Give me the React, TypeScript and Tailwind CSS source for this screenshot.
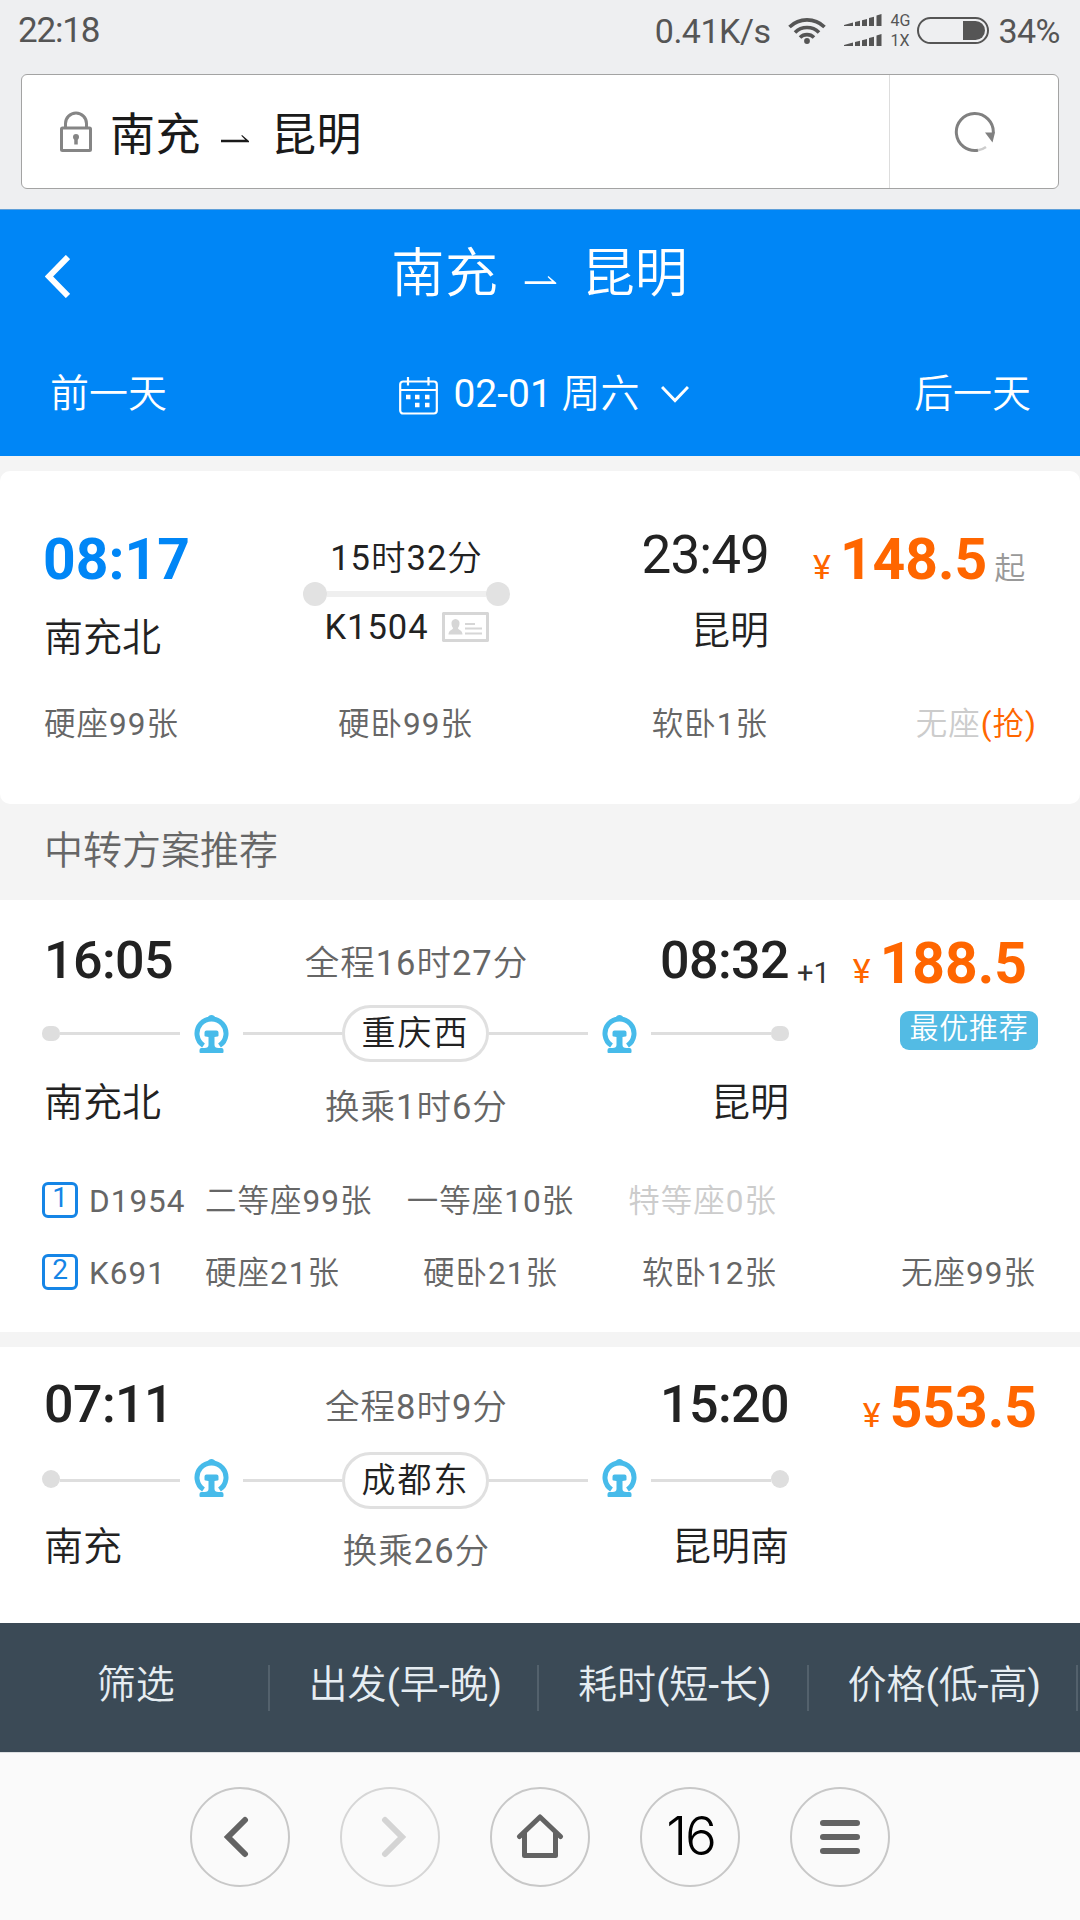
import type { ReactNode } from 'react';

interface Seat { label: string; soldOut?: boolean; }
interface Leg { train: string; seats: Seat[]; }

interface Transfer {
  depart: string;
  arrive: string;
  plusDay?: string;
  total: string;
  from: string;
  to: string;
  via: string;
  wait: string;
  price: string;
}

const legs: Leg[] = [
  { train: 'D1954', seats: [{ label: '二等座99张' }, { label: '一等座10张' }, { label: '特等座0张', soldOut: true }] },
  { train: 'K691', seats: [{ label: '硬座21张' }, { label: '硬卧21张' }, { label: '软卧12张' }, { label: '无座99张' }] },
];

const first: Transfer = {
  depart: '16:05', arrive: '08:32', plusDay: '+1', total: '全程16时27分',
  from: '南充北', to: '昆明', via: '重庆西', wait: '换乘1时6分', price: '188.5',
};

const second: Transfer = {
  depart: '07:11', arrive: '15:20', total: '全程8时9分',
  from: '南充', to: '昆明南', via: '成都东', wait: '换乘26分', price: '553.5',
};

const sorts = ['筛选', '出发(早-晚)', '耗时(短-长)', '价格(低-高)'];

function StatusBar() {
  return (
    <div className="flex h-[60px] items-center pl-[18px] pr-[20px] text-[34px] leading-[60px] text-[#555]">
      <span className="mt-[2px] text-[35px] tracking-[-1.2px]">22:18</span>
      <span className="ml-auto mt-px tracking-[-0.5px]">0.41K/s</span>
      <svg className="ml-[18px] h-[28px] w-[38px]" viewBox="0 0 38 28" fill="none" stroke="#555" strokeWidth="3.6">
        <path d="M1.5 11a25 25 0 0 1 35 0" />
        <path d="M7 16.500a17 17 0 0 1 24 0" />
        <path d="M12 21.500a10 10 0 0 1 14 0" />
        <circle cx="19" cy="25" r="2.900" fill="#555" stroke="none" />
      </svg>
      <div className="ml-[18px] flex flex-col gap-[8px]">
        <SignalBars />
        <SignalBars />
      </div>
      <div className="ml-[8px] mt-[2px] flex flex-col text-[16px] leading-[20px]">
        <span>4G</span>
        <span>1X</span>
      </div>
      <div className="ml-[7px] flex h-[27px] w-[72px] items-center justify-end rounded-full border-2 border-[#555] pr-[2px]">
        <div className="h-[19px] w-[22px] rounded-r-full bg-[#555]" />
      </div>
      <span className="ml-[9px] mt-px tracking-[-0.5px]">34%</span>
    </div>
  );
}

function SignalBars() {
  return (
    <svg className="h-[12px] w-[38px]" viewBox="0 0 38 12" fill="#555">
      <path d="M0 11 9 8.500V12H0zM11 8l5-1.200V12h-5zM18 6.300l5-1.200V12h-5zM25 4l5-1.200V12h-5zM32.500 1.500l5-1.500v12h-5z" />
    </svg>
  );
}

function AddressBar() {
  return (
    <div className="mx-[21px] mt-[14px] flex h-[115px] rounded-[6px] border border-[#a3a3a3] bg-white">
      <div className="flex flex-1 items-center pl-[38px] text-[45px] leading-[60px] text-[#1a1a1a]">
        <svg className="h-[41px] w-[32px]" viewBox="0 0 32 41" fill="none" stroke="#858585" strokeWidth="3">
          <rect x="1.500" y="17" width="29" height="22.500" rx="1" />
          <path d="M5.500 17V12.500a10.500 10.500 0 0 1 21 0V17" />
          <circle cx="16" cy="26" r="3" fill="#858585" stroke="none" />
          <path d="M16 26v7.500" strokeWidth="3.500" />
        </svg>
        <span className="ml-[18px] font-['Noto_Sans_CJK_SC',sans-serif] tracking-[0.5px]">南充</span>
        <Harpoon className="ml-[20px] mt-[14px] h-[8px] w-[28px]" />
        <span className="ml-[22px] font-['Noto_Sans_CJK_SC',sans-serif] tracking-[0.5px]">昆明</span>
      </div>
      <div className="flex w-[169px] items-center justify-center border-l border-[#ddd]">
        <svg className="ml-[2px] h-[42px] w-[42px]" viewBox="0 0 42 42" fill="none">
          <path d="M39.300 22A18.500 18.500 0 1 0 24 39.300" stroke="#808080" strokeWidth="3" />
          <path d="M24 39.300a18.500 18.500 0 0 0 8-3.200" stroke="#ccc" strokeWidth="2.500" />
          <path d="M31 21.500h10l-2.500 10z" fill="#808080" />
        </svg>
      </div>
    </div>
  );
}

function Harpoon({ className }: { className: string }) {
  return (
    <svg className={className} viewBox="0 0 28 8" fill="currentColor">
      <path d="M0 4.700h24.200L20.300.8 21 0l7 6v1.200H0z" />
    </svg>
  );
}

function RouteHeader() {
  return (
    <div className="h-[247px] border-t border-[#5f9fd8] bg-[#0086f6] px-[45px] text-white">
      <div className="flex h-[124px] items-center">
        <svg className="mt-[9px] h-[43px] w-[25px]" viewBox="0 0 25 43" fill="none" stroke="#fff" strokeWidth="6">
          <path d="M23 2 4 21.500 23 41" />
        </svg>
        <div className="mx-auto flex items-center pr-[26px] pt-[4px] text-[53px] leading-[64px]">
          <span className="tracking-[0.8px]">南充</span>
          <Harpoon className="ml-[25px] mt-[12px] h-[9px] w-[33px]" />
          <span className="ml-[25px]">昆明</span>
        </div>
      </div>
      <div className="flex h-[120px] items-center justify-between pl-[5px] pr-[4px] text-[39px] leading-[60px]">
        <span>前一天</span>
        <div className="flex items-center pl-[7px]">
          <svg className="mr-px mt-[3px] h-[38px] w-[39px]" viewBox="0 0 39 38" fill="none" stroke="#fff" strokeWidth="2.200">
            <rect x="1.200" y="4.500" width="36.600" height="32" rx="3" />
            <path d="M1.200 13H37.800M9 0v8.500M29.500 0v8.500" />
            <path d="M7 20h4.500M16 20h4.500M26 20h4.500M16 28h4.500M26 28h4.500" strokeWidth="4.500" />
          </svg>
          <span className="ml-[14px]">02-01 周六</span>
          <svg className="ml-[21px] h-[18px] w-[28px]" viewBox="0 0 28 18" fill="none" stroke="#fff" strokeWidth="3">
            <path d="M1 2 14 15.500 27 2" />
          </svg>
        </div>
        <span>后一天</span>
      </div>
    </div>
  );
}

function Price({ value, children }: { value: string; children?: ReactNode }) {
  return (
    <div className="flex items-baseline leading-[60px] text-[#ff6600]">
      <span className="text-[34px]">¥</span>
      <span className="ml-[9px] text-[57px] font-bold">{value}</span>
      {children}
    </div>
  );
}

function DirectCard() {
  return (
    <div className="h-[333px] rounded-[10px] bg-white pl-[44px] pr-[43px] pt-[58px] text-[#222]">
      <div className="flex h-[176px]">
        <div className="w-[241px]">
          <div className="-ml-px mt-px text-[57px] font-bold leading-[60px] text-[#0086f6]">08:17</div>
          <div className="mt-[28px] text-[39px] leading-[40px]">南充北</div>
        </div>
        <div className="flex w-[243px] flex-col items-center pt-[9px] text-[34.5px] leading-[40px] tracking-[1px]">
          <div>15时32分</div>
          <div className="mt-[4px] flex h-[24px] w-[207px] items-center">
            <span className="size-[24px] rounded-full bg-[#e2e2e2]" />
            <span className="h-[6px] flex-1 bg-[#efefef]" />
            <span className="size-[24px] rounded-full bg-[#e2e2e2]" />
          </div>
          <div className="mt-px flex items-center gap-[13px]">
            <span>K1504</span>
            <svg className="h-[30px] w-[47px]" viewBox="0 0 47 30" fill="#d6d6d6">
              <path fillRule="evenodd" d="M1 0h45l1 1v28l-1 1H1l-1-1V1zM3 3v24h41V3z" />
              <path d="M13.500 7a4.300 4.300 0 0 1 4 5c-.2 2-1 3-1.500 4 0 2 4.500 2 4.500 6.500h-14c0-4.500 4.500-4.500 4.500-6.500-.6-1-1.400-2-1.500-4a4.300 4.300 0 0 1 4-5z" />
              <path d="M23 11h10v2H23zM23 15.500h17v2H23zM23 20.500h17v2H23z" />
            </svg>
          </div>
        </div>
        <div className="-mt-[4px] w-[241px] text-right">
          <div className="text-[53px] leading-[60px] tracking-[-0.9px]">23:49</div>
          <div className="mt-[26px] text-[39px] leading-[40px]">昆明</div>
        </div>
        <div className="pl-[44px] pt-px">
          <Price value="148.5">
            <span className="ml-[7px] text-[31px] text-[#999]">起</span>
          </Price>
        </div>
      </div>
      <div className="flex text-[31.5px] leading-[40px] tracking-[1px] text-[#666]">
        <span className="w-[241px]">硬座99张</span>
        <span className="w-[241px] text-center">硬卧99张</span>
        <span className="w-[242px] text-right">软卧1张</span>
        <span className="flex-1 text-right text-[#ccc]">无座<span className="text-[#ff6600]">(抢)</span></span>
      </div>
    </div>
  );
}

function RailIcon({ className }: { className: string }) {
  return (
    <svg className={className} viewBox="0 0 35 38" fill="none">
      <path d="M9.500 30.500A14.500 14.500 0 1 1 25.500 30.500" stroke="#47bbea" strokeWidth="5" />
      <path d="M13.500 3c1-4 7-4 8 0z" fill="#47bbea" />
      <path d="M12.500 15.500h10q2 0 2 2v3q0 1-1 1l-3 .5v8q0 3 4 3h3q2 0 2 2v2q0 1-1 1h-22q-1 0-1-1v-2q0-2 2-2h3q4 0 4-3v-8l-3-.5q-1 0-1-1v-3q0-2 2-2z" fill="#47bbea" />
    </svg>
  );
}

function RouteLine({ via, raised }: { via: string; raised?: boolean }) {
  const dot = raised ? 'h-[15px] w-[18px] rounded-[7px] bg-[#dedede]' : 'mb-[4px] size-[18px] rounded-full bg-[#dedede]';
  const icon = raised ? 'mx-[14px] mt-px h-[38px] w-[35px]' : 'mx-[14px] mb-[5px] h-[38px] w-[35px]';
  return (
    <div className="-ml-[2px] flex h-[57px] w-[747px] items-center">
      <span className={dot} />
      <span className="h-[3px] w-[120px] bg-[#dedede]" />
      <RailIcon className={icon} />
      <span className="h-[3px] flex-1 bg-[#dedede]" />
      <span className="flex h-[57px] w-[147px] justify-center rounded-full border-[3px] border-[#e0e0e0] text-[34px] leading-[50px] tracking-[2px]">{via}</span>
      <span className="h-[3px] flex-1 bg-[#dedede]" />
      <RailIcon className={icon} />
      <span className="h-[3px] w-[120px] bg-[#dedede]" />
      <span className={dot} />
    </div>
  );
}

function TransferInfo({ plan, raised, tag }: { plan: Transfer; raised?: boolean; tag?: string }) {
  return (
    <div className="flex text-[#222]">
      <div className="w-[745px]">
        <div className="grid h-[60px] grid-cols-3 text-[52px] font-medium leading-[64px] tracking-[-0.6px]">
          <span>{plan.depart}</span>
          <span className="pt-[2px] text-center text-[34.5px] font-normal tracking-[1px] text-[#666]">{plan.total}</span>
          <span className="text-right">{plan.arrive}</span>
        </div>
        <div className={raised ? 'mt-[16px]' : 'mt-[19px]'}>
          <RouteLine via={plan.via} raised={raised} />
        </div>
        <div className={raised ? 'mt-[21px] grid h-[49px] grid-cols-3' : 'mt-[18px] grid h-[49px] grid-cols-3'}>
          <span className="text-[39px] leading-[40px]">{plan.from}</span>
          <span className="pt-[4px] text-center text-[34.5px] leading-[40px] tracking-[1px] text-[#666]">{plan.wait}</span>
          <span className="text-right text-[39px] leading-[40px]">{plan.to}</span>
        </div>
      </div>
      <div className="flex flex-1 flex-col items-end">
        <div className="mt-[5px] flex h-[60px] w-full items-baseline justify-end">
          {plan.plusDay && <span className="mr-auto pl-[8px] text-[29px] leading-[60px] text-[#333]">{plan.plusDay}</span>}
          <div className={plan.plusDay ? 'mr-[10px]' : ''}>
            <Price value={plan.price} />
          </div>
        </div>
        {tag && (
          <span className="mr-[-1px] mt-[17px] h-[39px] w-[138px] rounded-[9px] bg-[#53bbe4] text-center text-[29px] leading-[36px] tracking-[0.700px] text-white">{tag}</span>
        )}
      </div>
    </div>
  );
}

function LegRow({ index, leg }: { index: number; leg: Leg }) {
  return (
    <div className="flex h-[36px] items-center text-[31.5px] leading-[36px] tracking-[1px] text-[#666]">
      <span className="-ml-[2px] h-[36px] w-[36px] rounded-[6px] border-[3px] border-[#1585e6] text-center text-[28px] leading-[26px] tracking-normal text-[#1585e6]">{index}</span>
      <span className="mt-[3px] w-[127px] pl-[11px]">{leg.train}</span>
      <div className="mt-[3px] flex flex-1">
        <span className="w-[190px]">{leg.seats[0].label}</span>
        <span className="w-[191px] text-center">{leg.seats[1].label}</span>
        <span className={leg.seats[2].soldOut ? 'w-[191px] text-right text-[#ccc]' : 'w-[191px] text-right'}>{leg.seats[2].label}</span>
        {leg.seats[3] && <span className="flex-1 pr-px text-right">{leg.seats[3].label}</span>}
      </div>
    </div>
  );
}

function SortBar() {
  return (
    <div className="grid h-[129px] grid-cols-4 items-center bg-[#3b4a56] pr-[2px] text-[39px] leading-[45px] text-[#e6edf2]">
      {sorts.map((s) => (
        <span key={s} className="flex h-[46px] justify-center border-r-2 border-[#53616c] pl-[4px]"><span className="-mt-[2px]">{s}</span></span>
      ))}
    </div>
  );
}

function NavButton({ faded, children }: { faded?: boolean; children: ReactNode }) {
  return (
    <button className={faded ? 'flex size-[100px] items-center justify-center rounded-full border-2 border-[#d6d6d6]' : 'flex size-[100px] items-center justify-center rounded-full border-2 border-[#c8c8c8]'}>
      {children}
    </button>
  );
}

function BrowserNav() {
  return (
    <div className="flex h-[168px] justify-center gap-[50px] border-t border-[#dcdfe1] bg-[#fafafa] pt-[34px]">
      <NavButton>
        <svg className="mr-[8px] h-[42px] w-[26px]" viewBox="0 0 26 42" fill="none" stroke="#636363" strokeWidth="6" strokeLinecap="round">
          <path d="M22 4 5 21 22 38" />
        </svg>
      </NavButton>
      <NavButton faded>
        <svg className="ml-[8px] h-[42px] w-[26px]" viewBox="0 0 26 42" fill="none" stroke="#d4d4d4" strokeWidth="6" strokeLinecap="round">
          <path d="M4 4 21 21 4 38" />
        </svg>
      </NavButton>
      <NavButton>
        <svg className="mb-[3px] h-[46px] w-[48px]" viewBox="0 0 48 46" fill="none" stroke="#636363" strokeWidth="5" strokeLinecap="round" strokeLinejoin="round">
          <path d="M3.500 23.500 24 4 44.500 23.500M8.500 20.500V42.500H39.500V20.500" />
        </svg>
      </NavButton>
      <NavButton>
        <span className="pb-[2px] pl-px font-['Inter',sans-serif] text-[53px] font-light leading-[60px] tracking-[-2px] text-black">16</span>
      </NavButton>
      <NavButton>
        <div className="flex w-[40px] flex-col gap-[8px]">
          <span className="h-[6px] rounded-full bg-[#636363]" />
          <span className="h-[6px] rounded-full bg-[#636363]" />
          <span className="h-[6px] rounded-full bg-[#636363]" />
        </div>
      </NavButton>
    </div>
  );
}

export default function App() {
  return (
    <div className="flex h-[1920px] w-[1080px] flex-col overflow-hidden bg-[#f4f4f4] font-['Roboto','Noto_Sans_CJK_SC_DemiLight','Noto_Sans_CJK_SC_Light','Noto_Sans_CJK_SC',sans-serif]">
      <div className="h-[209px] bg-[#eeeff1]">
        <StatusBar />
        <AddressBar />
      </div>
      <RouteHeader />
      <div className="h-[15px]" />
      <DirectCard />
      <div className="h-[96px] pl-[44px] pt-[21px] text-[39px] leading-[52px] text-[#666]">中转方案推荐</div>
      <div className="h-[432px] bg-white pl-[44px] pr-[43px] pt-[29px]">
        <TransferInfo plan={first} raised tag="最优推荐" />
        <div className="mt-[50px] flex flex-col gap-[36px]">
          {legs.map((leg, i) => <LegRow key={leg.train} index={i + 1} leg={leg} />)}
        </div>
      </div>
      <div className="h-[15px]" />
      <div className="h-[276px] bg-white pl-[44px] pr-[43px] pt-[26px]">
        <TransferInfo plan={second} />
      </div>
      <SortBar />
      <BrowserNav />
    </div>
  );
}
